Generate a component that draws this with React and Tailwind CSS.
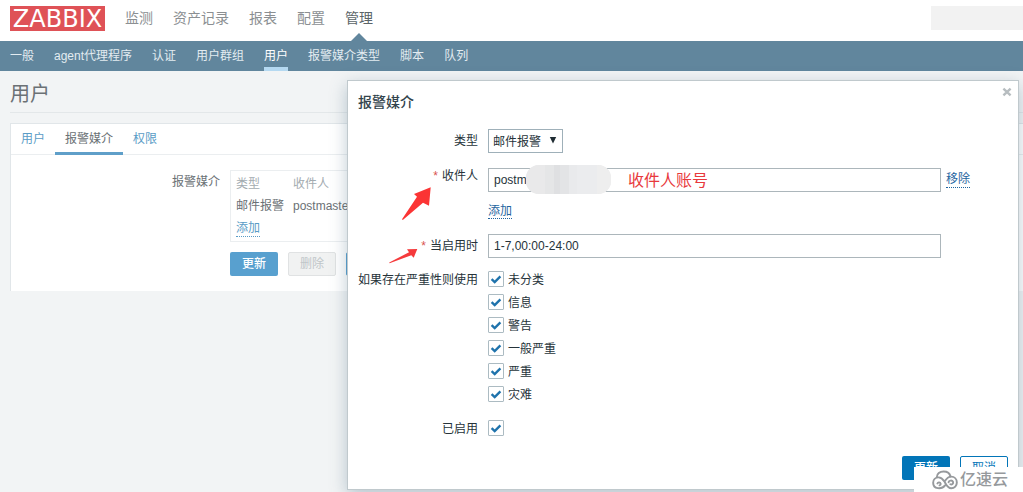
import React from "react";

const mainMenu = ["监测", "资产记录", "报表", "配置", "管理"];
const subMenu = ["一般", "agent代理程序", "认证", "用户群组", "用户", "报警媒介类型", "脚本", "队列"];
const tabs = ["用户", "报警媒介", "权限"];
const severities = ["未分类", "信息", "警告", "一般严重", "严重", "灾难"];

function Header() {
  return (
    <header>
      <div className="flex h-[41px] items-start bg-white pl-[10px]">
        <a
          href="#home"
          className="mt-[6px] flex h-[25px] w-[95px] items-center justify-center bg-[#df5257] font-['DejaVu_Sans'] text-[24px] leading-6 text-white"
        >
          ZABBIX
        </a>
        <nav className="ml-5 flex h-[41px] gap-5 text-sm leading-9">
          {mainMenu.map((item) => {
            const active = item === "管理";
            return (
              <a
                key={item}
                href={"#" + item}
                className={active ? "relative text-[#5b6468]" : "text-[#8b8f92]"}
              >
                {item}
                {active && (
                  <span className="absolute bottom-0 left-1/2 -translate-x-1/2 border-x-8 border-b-8 border-x-transparent border-b-[#61869d]" />
                )}
              </a>
            );
          })}
        </nav>
        <div className="mt-[6px] ml-auto h-6 w-[92px] bg-[#f2f2f2]" />
      </div>
      <nav className="flex h-[30px] gap-5 bg-[#61869d] pl-[10px] text-xs leading-[30px] text-[#e3ecf1]">
        {subMenu.map((item) => (
          <a
            key={item}
            href={"#sub-" + item}
            className={item === "用户" ? "border-b-4 border-[#b5d9f1] text-white" : ""}
          >
            {item}
          </a>
        ))}
      </nav>
    </header>
  );
}

function UserPanel() {
  return (
    <section className="mt-[10px] ml-[10px] border-t border-l border-[#e1e6e9] bg-white">
      <div className="flex h-[31px] border-b border-[#ebeef0] text-xs leading-[30px]">
        {tabs.map((t) => (
          <a
            key={t}
            href={"#tab-" + t}
            className={
              t === "报警媒介"
                ? "h-[31px] border-b-[3px] border-[#5f9fc9] px-[10px] text-[#6b7175]"
                : "px-[10px] text-[#5a9cc6]"
            }
          >
            {t}
          </a>
        ))}
      </div>
      <div className="flex gap-[10px] pt-[15px] pb-[15px] text-xs text-[#6b7175]">
        <div className="w-[209px] text-right leading-6">报警媒介</div>
        <div className="mr-[10px] min-w-0 flex-1">
          <div className="h-[72px] border border-[#ebeef0] pt-[2px] pl-[5px]">
            <table className="border-collapse text-left leading-[22px]">
              <thead>
                <tr className="text-[#a3abb0]">
                  <th className="w-[57px] p-0 font-normal">类型</th>
                  <th className="p-0 font-normal">收件人</th>
                </tr>
              </thead>
              <tbody>
                <tr>
                  <td className="p-0">邮件报警</td>
                  <td className="p-0">postmaster</td>
                </tr>
              </tbody>
            </table>
            <button type="button" className="mt-[3px] block border-b border-dotted border-[#5a9cc6] leading-4 text-[#5a9cc6]">
              添加
            </button>
          </div>
          <div className="mt-[10px] flex gap-[10px]">
            <button type="button" className="h-6 w-12 rounded-[2px] bg-[#58a0cf] font-medium text-white">更新</button>
            <button type="button" disabled className="h-6 w-12 rounded-[2px] border border-[#e0e2e3] bg-[#f1f2f2] text-[#c0c6c9]">
              删除
            </button>
            <button type="button" className="h-6 w-12 rounded-[2px] border border-[#58a0cf] bg-white text-[#58a0cf]">取消</button>
          </div>
        </div>
      </div>
    </section>
  );
}

function CheckBox({ id }) {
  return (
    <span className="relative flex h-4 w-4 shrink-0">
      <input
        id={id}
        type="checkbox"
        defaultChecked
        className="peer h-4 w-4 appearance-none rounded-[1px] border border-[#acbbc2] bg-white"
      />
      <svg viewBox="0 0 16 16" className="pointer-events-none absolute inset-0 hidden h-4 w-4 peer-checked:block">
        <path d="M3.6 8.2 L6.7 11.1 L12.4 5.4" fill="none" stroke="#1f73ac" strokeWidth="2.4" />
      </svg>
    </span>
  );
}

function Row({ label, htmlFor, required, className, labelClass, children }) {
  return (
    <div className={"flex gap-[10px] " + className}>
      <label htmlFor={htmlFor} className={"w-[120px] shrink-0 text-right whitespace-nowrap " + labelClass}>
        {required && <span className="mr-1 text-[#d9534f]">*</span>}
        {label}
      </label>
      <div className="min-w-0 flex-1">{children}</div>
    </div>
  );
}

function MediaDialog() {
  return (
    <div
      role="dialog"
      aria-labelledby="dialog-title"
      className="absolute top-20 right-1 left-[347px] border border-[#c0c9cd] bg-white px-[10px] pb-[9px] text-xs text-[#26333a] shadow-[0_5px_16px_0_rgba(70,105,130,0.35)]"
    >
      <button type="button" aria-label="关闭" className="absolute top-[6px] right-[6px] p-0">
        <svg viewBox="0 0 10 10" className="h-[10px] w-[10px]">
          <path d="M1.4 1.6 L8.6 8.4 M8.6 1.6 L1.4 8.4" stroke="#b7bdc0" strokeWidth="2.4" />
        </svg>
      </button>
      <h2 id="dialog-title" className="pt-[11px] text-sm leading-5 font-medium text-[#33444d]">报警媒介</h2>

      <form className="mt-[17px]" onSubmit={(e) => e.preventDefault()}>
        <Row label="类型" htmlFor="type" className="mb-[15px]" labelClass="leading-6">
          <div className="relative w-[75px]">
            <select id="type" className="block h-6 w-full appearance-none border border-[#9fb0b9] bg-white pt-[2px] pl-1">
              <option>邮件报警</option>
            </select>
            <svg viewBox="0 0 8 8" className="pointer-events-none absolute top-[7px] right-[6px] h-2 w-2">
              <path d="M0.8 1 H7.2 L4 7.4 Z" fill="#1f2c33" />
            </svg>
          </div>
        </Row>

        <Row label="收件人" htmlFor="sendto" required className="mb-[15px]" labelClass="leading-4">
          <div className="flex items-center gap-[5px]">
            <div className="relative w-[453px]">
              <input
                id="sendto"
                defaultValue="postm"
                className="block h-6 w-full border border-[#acb6bb] bg-white px-[5px]"
              />
              <div className="absolute -top-[3px] left-[38px] flex h-[29px] w-[85px] overflow-hidden rounded-[13px] bg-[#ebebec]">
                <span className="w-[19px] bg-[#e9e9ea]" />
                <span className="w-[9px] bg-[#e5e6e7]" />
                <span className="w-[6px] bg-[#dfe0e2]" />
                <span className="w-[9px] bg-[#e3e4e6]" />
                <span className="w-[8px] bg-[#e9eaec]" />
                <span className="w-[20px] bg-[#ebecee]" />
                <span className="flex-1 bg-[#eeeeee]" />
              </div>
              <span className="absolute top-0 left-[140px] text-base leading-[26px] text-[#e8393c]">收件人账号</span>
            </div>
            <button type="button" className="border-b border-dotted border-[#1f65a0] leading-[15px] text-[#1f65a0]">移除</button>
          </div>
          <button type="button" className="mt-3 block border-b border-dotted border-[#1f65a0] leading-[14px] text-[#1f65a0]">
            添加
          </button>
        </Row>

        <Row label="当启用时" htmlFor="period" required className="mb-[13px]" labelClass="leading-6">
          <input
            id="period"
            defaultValue="1-7,00:00-24:00"
            className="block h-6 w-[453px] border border-[#acb6bb] bg-white px-[5px]"
          />
        </Row>

        <Row label="如果存在严重性则使用" htmlFor="severity-0" className="mb-[18px]" labelClass="leading-[18px]">
          <div className="flex flex-col gap-[7px]">
            {severities.map((s, i) => (
              <label key={s} htmlFor={"severity-" + i} className="flex h-4 gap-1 leading-[18px]">
                <CheckBox id={"severity-" + i} />
                {s}
              </label>
            ))}
          </div>
        </Row>

        <Row label="已启用" htmlFor="enabled" className="mb-[18px]" labelClass="leading-[18px]">
          <CheckBox id="enabled" />
        </Row>

        <div className="flex justify-end gap-[10px]">
          <button type="submit" className="h-6 w-12 rounded-[2px] bg-[#0275b8] font-medium text-white">更新</button>
          <button type="button" className="h-6 w-12 rounded-[2px] border border-[#0275b8] bg-white text-[#0275b8]">取消</button>
        </div>
      </form>

      <svg viewBox="0 0 30 34" className="pointer-events-none absolute top-[106px] left-[54px] h-[34px] w-[30px]">
        <path d="M28.7 0.3 L12 7 L15 9.7 L0 32.2 L0.8 33 L21 15.7 L27 18.7 Z" fill="#fb3434" />
      </svg>
      <svg viewBox="0 0 30 16" className="pointer-events-none absolute top-[167px] left-[41px] h-4 w-[30px]">
        <path d="M28.3 1 L18 1.3 L20 4.3 L0.2 14.4 L0.6 15.2 L22.3 7.3 L24.7 9.7 Z" fill="#f53a3c" />
      </svg>
    </div>
  );
}

function Watermark() {
  return (
    <div className="absolute right-0 bottom-0 flex h-[25px] w-[109px] items-center bg-white pl-[18px] text-base leading-6 font-medium text-[#96999c]">
      <svg viewBox="0 0 27 20" className="mr-[2px] h-5 w-[26px]">
        <g fill="none" stroke="#96999c" strokeWidth="2" strokeLinecap="round">
          <path d="M5 7.2 C4.9 3.6 8.2 1.2 12 1.2 C15.8 1.2 18.6 3.4 19.2 6.4" />
          <path d="M13.6 15.6 C11.4 18.4 8.6 18.8 6 18.4 C3 18 1.2 15.6 1.2 12.8 C1.2 9.6 3.6 7.4 6.6 7.3 C9.6 7.2 11.2 9 12.8 11.4 C14.6 14.4 16 18.6 20 18.6 C23.4 18.6 25.8 15.8 25.8 12.6 C25.8 9.2 23.4 6.5 20 6.5 C16.6 6.5 14.8 8.8 13.2 11.4" />
          <path d="M5.6 13.6 C6.2 12 8.6 12.2 9 13.8 C9.2 14.8 8.6 15.4 7.8 15.6" />
          <path d="M17.2 12.4 C17.6 10.4 20.8 9.8 21.8 11.8 C22.6 13.8 20.6 15.2 19 14.4" />
        </g>
      </svg>
      亿速云
    </div>
  );
}

export default function App() {
  return (
    <div className="relative min-h-screen overflow-hidden bg-[#f2f4f5] font-['Liberation_Sans','Noto_Sans_CJK_SC',sans-serif]">
      <Header />
      <main>
        <h1 className="ml-[10px] h-[42px] border-b border-[#e3e7e9] pt-[7px] text-xl leading-8 text-[#6b7175]">用户</h1>
        <UserPanel />
      </main>
      <MediaDialog />
      <Watermark />
    </div>
  );
}
